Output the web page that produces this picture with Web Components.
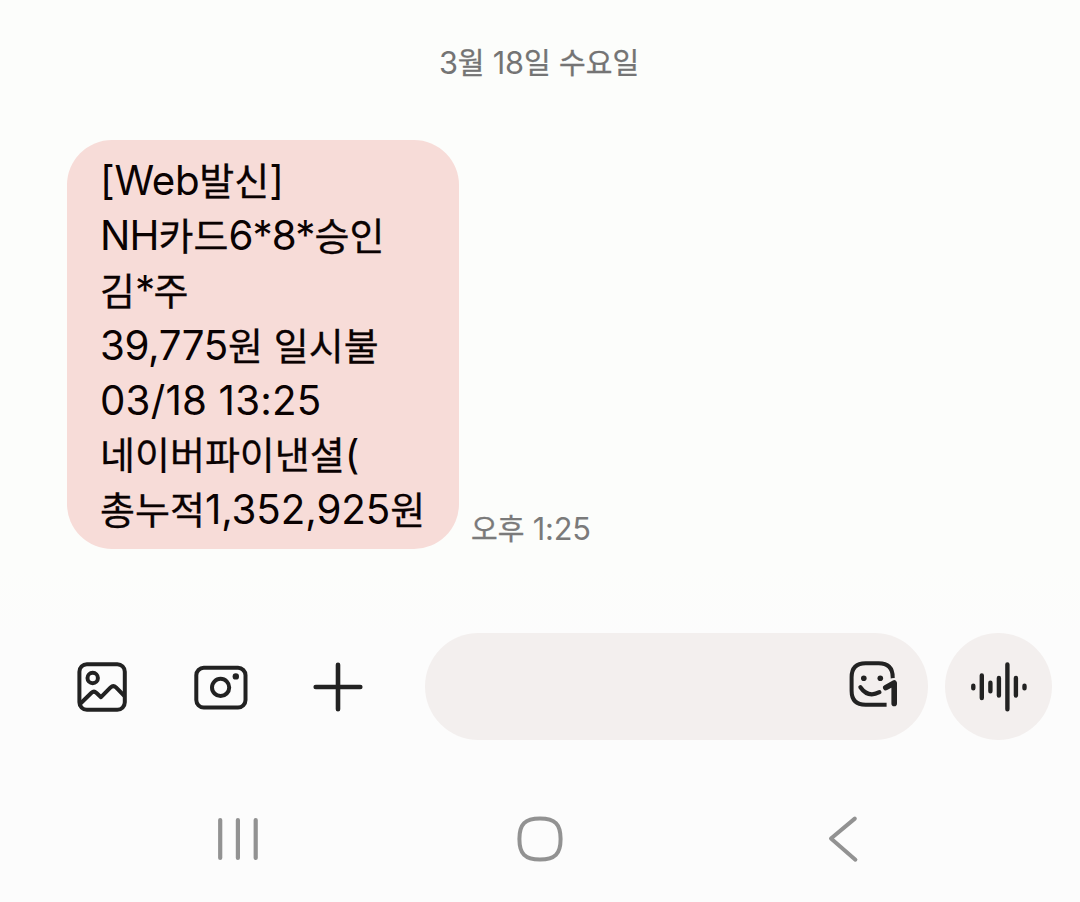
<!DOCTYPE html>
<html lang="ko">
<head>
<meta charset="utf-8">
<title>Messages</title>
<style>
  body {
    margin: 0;
    background: #fcfcfc;
    font-family: Inter, "Noto Sans CJK KR", sans-serif;
  }
</style>
</head>
<body>
<message-app>
  <message-thread slot="thread">
    <date-label slot="date" spacing="-0.2">3월 18일 수요일</date-label>
    <message-bubble>
      <mixed-text spacing="-0.3">[Web발신]</mixed-text>
      <mixed-text spacing="-0.9">NH카드6*8*승인</mixed-text>
      <mixed-text spacing="-1.6">김*주</mixed-text>
      <mixed-text spacing="-0.4">39,775원 일시불</mixed-text>
      <mixed-text spacing="0.2">03/18 13:25</mixed-text>
      <mixed-text spacing="0">네이버파이낸셜(</mixed-text>
      <mixed-text spacing="-0.1">총누적1,352,925원</mixed-text>
      <mixed-text slot="time" spacing="-0.2">오후 1:25</mixed-text>
    </message-bubble>
  </message-thread>
  <compose-bar slot="compose"></compose-bar>
  <system-nav slot="nav"></system-nav>
</message-app>

<script>
// Hangul and latin runs get their own size so both scripts sit evenly on a line
class MixedText extends HTMLElement {
  connectedCallback() {
    const shadow = this.attachShadow({ mode: "open" });
    const spacing = this.getAttribute("spacing") || 0;
    const runs = this.textContent.trim().match(/[가-힣]+|[^가-힣]+/g) || [];

    shadow.innerHTML = `
      <style>
        :host {
          display: block;
        }
        div {
          white-space: pre;
        }
        .ko {
          font-family: "Noto Sans CJK KR", sans-serif;
          line-height: 1;
          -webkit-text-stroke: 0.3px currentColor;
        }
        .en {
          font-size: 1.06em;
          letter-spacing: ${spacing}px;
        }
      </style>
      <div>${runs
        .map((run) => `<span class="${/[가-힣]/.test(run) ? "ko" : "en"}">${run}</span>`)
        .join("")}</div>
    `;
  }
}

class DateLabel extends HTMLElement {
  connectedCallback() {
    const shadow = this.attachShadow({ mode: "open" });
    shadow.innerHTML = `
      <style>
        :host {
          display: flex;
          justify-content: center;
          height: 140px;
          padding: 43px 2px 0 0;
          box-sizing: border-box;
          color: #747474;
          font-size: 29px;
          line-height: 40px;
        }
      </style>
      <mixed-text spacing="${this.getAttribute("spacing")}">${this.textContent}</mixed-text>
    `;
  }
}

class MessageBubble extends HTMLElement {
  connectedCallback() {
    const shadow = this.attachShadow({ mode: "open" });
    shadow.innerHTML = `
      <style>
        :host {
          display: flex;
          align-items: flex-end;
          gap: 12px;
          padding-left: 67px;
        }
        .bubble {
          width: 392px;
          height: 408.6px;
          box-sizing: border-box;
          padding: 14px 0 0 33px;
          border-radius: 45px;
          background: #f7dcd8;
          color: #0a0202;
          font-size: 38px;
          line-height: 54.9px;
        }
        .bubble ::slotted(*) {
          height: 54.9px;
        }
        .time {
          height: 40px;
          color: #7a7a7a;
          font-size: 29px;
          line-height: 40px;
        }
      </style>
      <div class="bubble"><slot></slot></div>
      <div class="time"><slot name="time"></slot></div>
    `;
  }
}

class MessageThread extends HTMLElement {
  connectedCallback() {
    const shadow = this.attachShadow({ mode: "open" });
    shadow.innerHTML = `
      <style>
        :host {
          display: block;
          height: 633px;
          background: linear-gradient(#fcfdfb 90%, #fcfcfc);
        }
      </style>
      <slot name="date"></slot>
      <slot></slot>
    `;
  }
}

class ComposeBar extends HTMLElement {
  connectedCallback() {
    const shadow = this.attachShadow({ mode: "open" });
    shadow.innerHTML = `
      <style>
        :host {
          display: flex;
          align-items: center;
          height: 107px;
          padding: 0 28px 0 72px;
        }
        svg {
          display: block;
          fill: none;
          stroke: #222;
          stroke-width: 4;
          stroke-linecap: round;
          stroke-linejoin: round;
        }
        .tools {
          display: flex;
          gap: 58px;
          width: 353px;
        }
        .input {
          display: flex;
          align-items: center;
          justify-content: flex-end;
          width: 503px;
          height: 107px;
          padding-right: 24px;
          box-sizing: border-box;
          border-radius: 54px;
          background: #f3efee;
        }
        .voice {
          display: grid;
          place-items: center;
          width: 107px;
          height: 107px;
          margin-left: 17px;
          border-radius: 50%;
          background: #f3efee;
        }
        .dot {
          fill: #222;
          stroke: none;
        }
      </style>
      <div class="tools">
        <svg width="60" height="60" viewBox="72 657 60 60">
          <rect x="79.4" y="664.2" width="45.4" height="45.6" rx="7.5"/>
          <circle cx="92.7" cy="678" r="5.2"/>
          <path d="M80 704 L91.5 692.8 Q94 690.5 96.3 692.8 L101 697.2 L110.6 687.4 Q113.3 684.8 116 687.4 L124 695.5"/>
        </svg>
        <svg width="60" height="60" viewBox="190 657 60 60">
          <rect x="196.3" y="667.8" width="49.2" height="39.8" rx="7.5"/>
          <circle cx="220.6" cy="687.4" r="8.6"/>
          <circle class="dot" cx="235.8" cy="676.4" r="3.2"/>
        </svg>
        <svg width="60" height="60" viewBox="308 657 60 60">
          <path d="M338 664.8V709.2M315.7 687H360.3" stroke-width="4.6"/>
        </svg>
      </div>
      <div class="input">
        <svg width="60" height="60" viewBox="844.4 657 60 60">
          <path d="M887 704.8H866 Q852 704.8 852 690.8V677.2 Q852 663.2 866 663.2H879 Q893.1 663.2 893.1 677.2V678.5" stroke-linecap="butt"/>
          <circle class="dot" cx="864.2" cy="678.2" r="2.8"/>
          <circle class="dot" cx="880.7" cy="678.2" r="2.8"/>
          <path d="M860.8 687.2 Q868.5 698.2 879.8 692.2" stroke-width="4.2"/>
          <path d="M886.2 687.6 L894.6 683V703.4" stroke="#f3efee" stroke-width="10"/>
          <path d="M886.2 687.6 L894.6 683V703.4" stroke-width="5.6"/>
        </svg>
      </div>
      <div class="voice">
        <svg width="60" height="60" viewBox="969 657 60 60">
          <path d="M973.3 685.8V688.2M981.8 675.4V698M990.4 682.8V691.2M998.9 678V695.6M1007.4 664.5V709.2M1015.9 678V695.6M1024.5 685.8V688.2" stroke-width="4.4"/>
        </svg>
      </div>
    `;
  }
}

class SystemNav extends HTMLElement {
  connectedCallback() {
    const shadow = this.attachShadow({ mode: "open" });
    shadow.innerHTML = `
      <style>
        :host {
          display: flex;
          align-items: center;
          justify-content: space-between;
          height: 70px;
          padding: 64px 207px 28px 208px;
        }
        svg {
          fill: none;
          stroke: #929292;
          stroke-width: 4;
          stroke-linecap: round;
          stroke-linejoin: round;
        }
      </style>
      <svg width="60" height="60" viewBox="208 809 60 60">
        <path d="M220.2 820V858M237.9 820V858M255.7 820V858" stroke-width="4.2"/>
      </svg>
      <svg width="60" height="60" viewBox="511 809 60 60">
        <path d="M540 818.4C555 818.4 560.6 824 560.6 839S555 859.5 540 859.5S519.4 854 519.4 839S525 818.4 540 818.4Z"/>
      </svg>
      <svg width="60" height="60" viewBox="813 809 60 60">
        <path d="M854.8 818.6L831 838.5L855.4 859.7"/>
      </svg>
    `;
  }
}

class MessageApp extends HTMLElement {
  connectedCallback() {
    const shadow = this.attachShadow({ mode: "open" });
    shadow.innerHTML = `
      <style>
        :host {
          display: flex;
          flex-direction: column;
          width: 1080px;
          height: 902px;
          overflow: hidden;
        }
      </style>
      <slot name="thread"></slot>
      <slot name="compose"></slot>
      <slot name="nav"></slot>
    `;
  }
}

customElements.define("mixed-text", MixedText);
customElements.define("date-label", DateLabel);
customElements.define("message-bubble", MessageBubble);
customElements.define("message-thread", MessageThread);
customElements.define("compose-bar", ComposeBar);
customElements.define("system-nav", SystemNav);
customElements.define("message-app", MessageApp);
</script>
</body>
</html>
